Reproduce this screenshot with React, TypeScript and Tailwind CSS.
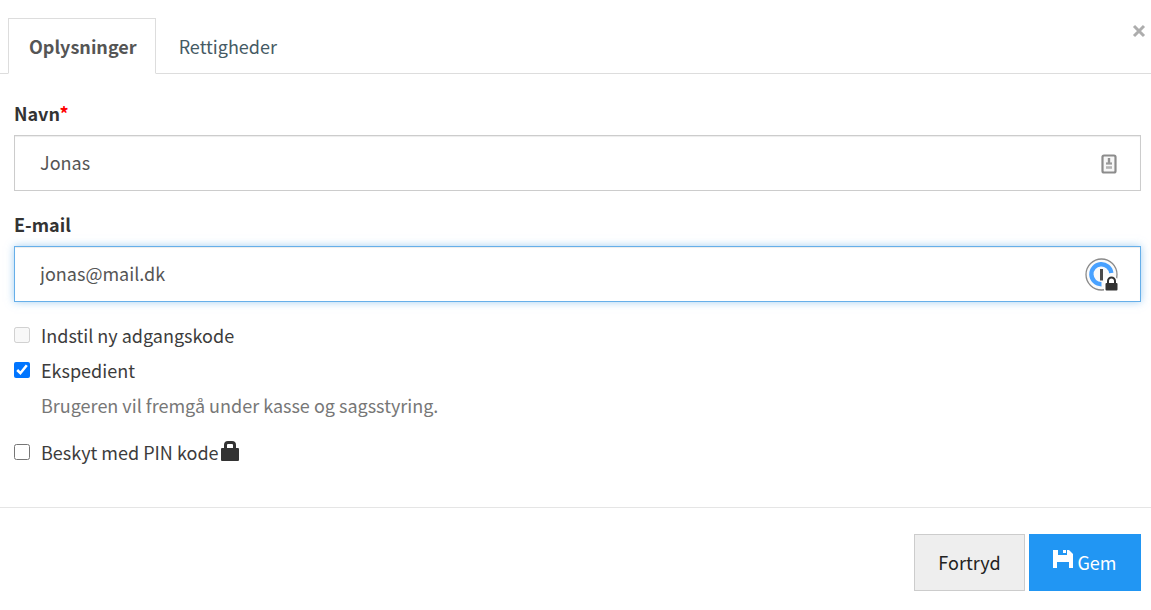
import { useState } from "react";
import type { ReactNode } from "react";

interface TabProps {
  label: string;
  active: boolean;
  onClick: () => void;
}

function Tab({ label, active, onClick }: TabProps) {
  return (
    <button
      type="button"
      role="tab"
      aria-selected={active}
      onClick={onClick}
      className={`-mb-px h-14 border pr-[18px] pb-px pl-5 ${
        active
          ? "border-[#dddddd] border-b-white bg-white font-bold text-[#555555]"
          : "border-transparent text-[#455a64]"
      }`}
    >
      {label}
    </button>
  );
}

interface CheckRowProps {
  id: string;
  checked: boolean;
  disabled?: boolean;
  onChange: (checked: boolean) => void;
  children: ReactNode;
}

function CheckRow({ id, checked, disabled, onChange, children }: CheckRowProps) {
  return (
    <div className="flex h-[35px] items-start">
      <input
        id={id}
        type="checkbox"
        checked={checked}
        disabled={disabled}
        onChange={(e) => onChange(e.target.checked)}
        className="mt-[7px] mr-[11px] size-4 shrink-0 accent-[#0075ff]"
      />
      <label htmlFor={id} className="flex items-center gap-[2px] leading-[30px] text-[#3c3c3c]">
        {children}
      </label>
    </div>
  );
}

function LockIcon() {
  return (
    <svg width="18" height="20" viewBox="0 0 18 20" fill="#333333" className="mb-[2px]" aria-hidden="true">
      <path
        fillRule="evenodd"
        d="M1 7h2V4a4 4 0 0 1 4-4h4a4 4 0 0 1 4 4v3h2a1 1 0 0 1 1 1v11a1 1 0 0 1-1 1H1a1 1 0 0 1-1-1V8a1 1 0 0 1 1-1Zm5 0h6V4a1 1 0 0 0-1-1H7a1 1 0 0 0-1 1v3Z"
      />
    </svg>
  );
}

function SaveIcon() {
  return (
    <svg width="20" height="18" viewBox="0 0 20 18" fill="currentColor" className="mb-[6px]" aria-hidden="true">
      <path d="M0 0h5v5h9V0h2l4 4v14h-4v-6H4v6H0Z" />
      <path d="M10 0h3v3h-3Z" />
    </svg>
  );
}

function ContactIcon() {
  return (
    <svg width="16" height="20" viewBox="0 0 16 20" aria-hidden="true">
      <rect x="1.5" y="1.5" width="13" height="17" rx="1.5" fill="#f7f7f7" stroke="#8c8c8c" strokeWidth="2.2" />
      <path d="M8 4v5" stroke="#929292" strokeWidth="2.4" />
      <path d="M5 9.5h6" stroke="#999999" strokeWidth="2.2" />
      <path d="M5 13.5h6" stroke="#b4b4b4" strokeWidth="2.6" />
    </svg>
  );
}

function PasswordManagerIcon() {
  return (
    <svg width="33" height="33" viewBox="0 0 33 33" fill="none" aria-hidden="true">
      <circle cx="16.5" cy="16.5" r="15.5" fill="#fafafa" stroke="#8a8a8a" strokeWidth="1.3" />
      <path d="M16.5 26.2A10 10 0 1 1 26.3 15" stroke="#48a1ff" strokeWidth="4.4" />
      <path d="M16.5 11v11.5" stroke="#4a4a4a" strokeWidth="3" />
      <path d="M19 33V22l3-4h8l3 4v11Z" fill="#ffffff" />
      <path d="M23 26v-3a3.5 3.5 0 0 1 7 0v3" stroke="#333333" strokeWidth="2" />
      <rect x="20.5" y="25" width="12" height="7.5" rx="1" fill="#333333" />
    </svg>
  );
}

const inputClass =
  "block h-14 w-full border bg-white pr-20 pb-[2px] pl-[25px] text-[#555555] outline-none";

export default function App() {
  const [tab, setTab] = useState("oplysninger");
  const [name, setName] = useState("Jonas");
  const [email, setEmail] = useState("jonas@mail.dk");
  const [newPassword, setNewPassword] = useState(false);
  const [clerk, setClerk] = useState(true);
  const [pin, setPin] = useState(false);

  return (
    <div className="bg-white font-['Noto_Sans_CJK_JP','Noto_Sans_CJK_SC',sans-serif] text-[18px] leading-6 text-[#333333]">
      <header className="flex items-start justify-between border-b border-[#dddddd] pt-[18px] pl-2">
        <div role="tablist" className="flex gap-[2px]">
          <Tab
            label="Oplysninger"
            active={tab === "oplysninger"}
            onClick={() => setTab("oplysninger")}
          />
          <Tab
            label="Rettigheder"
            active={tab === "rettigheder"}
            onClick={() => setTab("rettigheder")}
          />
        </div>
        <button type="button" aria-label="Luk" className="p-1 pt-[6px] text-[#adadad]">
          <svg width="16" height="14" viewBox="0 0 16 14" aria-hidden="true">
            <path d="M3 2l10 10M13 2L3 12" stroke="currentColor" strokeWidth="3" />
          </svg>
        </button>
      </header>

      <form onSubmit={(e) => e.preventDefault()}>
        <div className="pt-[27px] pr-[10px] pb-[34px] pl-[14px]">
          <label htmlFor="name" className="mb-[10px] block font-bold">
            Navn<span className="text-[#ff0000]">*</span>
          </label>
          <div className="relative">
            <input
              id="name"
              type="text"
              value={name}
              onChange={(e) => setName(e.target.value)}
              className={`${inputClass} border-[#cccccc] shadow-[inset_0_1px_1px_rgba(0,0,0,0.075)]`}
            />
            <span className="absolute inset-y-0 right-6 flex items-center pt-px">
              <ContactIcon />
            </span>
          </div>

          <label htmlFor="email" className="mt-[21px] mb-[10px] block font-bold">
            E-mail
          </label>
          <div className="relative">
            <input
              id="email"
              type="email"
              value={email}
              onChange={(e) => setEmail(e.target.value)}
              className={`${inputClass} border-[#66afe9] shadow-[inset_0_1px_1px_rgba(0,0,0,0.075),0_0_8px_rgba(102,175,233,0.6)]`}
            />
            <span className="absolute inset-y-0 right-[23px] flex items-center">
              <PasswordManagerIcon />
            </span>
          </div>

          <div className="mt-[18px]">
            <CheckRow id="new-password" checked={newPassword} disabled onChange={setNewPassword}>
              Indstil ny adgangskode
            </CheckRow>
            <CheckRow id="clerk" checked={clerk} onChange={setClerk}>
              Ekspedient
            </CheckRow>
            <p className="mb-[17px] pl-[27px] leading-[30px] text-[#777777]">
              Brugeren vil fremgå under kasse og sagsstyring.
            </p>
            <CheckRow id="pin" checked={pin} onChange={setPin}>
              Beskyt med PIN kode
              <LockIcon />
            </CheckRow>
          </div>
        </div>

        <footer className="mt-px flex justify-end gap-1 border-t border-[#e5e5e5] pt-[26px] pr-[10px] pb-[19px]">
          <button
            type="button"
            className="h-[57px] w-[111px] border border-[#cccccc] bg-[#eeeeee] pb-[2px] text-[#222222]"
          >
            Fortryd
          </button>
          <button
            type="submit"
            className="flex h-[57px] w-28 items-center justify-center gap-1 bg-[#2196f3] pb-[2px] text-white"
          >
            <SaveIcon />
            Gem
          </button>
        </footer>
      </form>
    </div>
  );
}
